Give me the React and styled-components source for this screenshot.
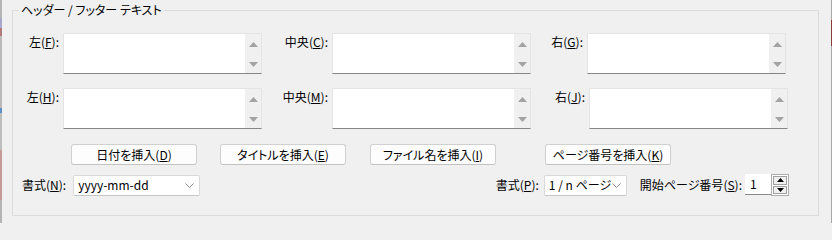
import React from "react";
import styled, { createGlobalStyle } from "styled-components";

const Global = createGlobalStyle`
  html, body { margin: 0; padding: 0; background: #f0f0f0; overflow: hidden; }
  body {
    height: 223px;
    font-family: "Noto Sans CJK JP", "Noto Sans", sans-serif;
    font-size: 12px;
    color: #000;
    font-feature-settings: "palt";
  }
  * { box-sizing: border-box; }
`;

const Page = styled.div`
  width: 832px;
  height: 223px;
  display: flex;
  background: #f0f0f0;
  overflow: hidden;
`;

const LeftEdge = styled.div`
  width: 2px;
  flex: none;
  background: linear-gradient(
    to bottom,
    #b4b4b4 0px, #b4b4b4 18px,
    #a9a6cf 18px, #a9a6cf 28px,
    #b07a7a 28px, #b07a7a 36px,
    #b9b9b9 36px, #b9b9b9 108px,
    #5d8fc8 108px, #5d8fc8 113px,
    #bdbdbd 113px, #bdbdbd 150px,
    #c49a9a 150px, #c49a9a 200px,
    #b4b4b4 200px
  );
`;

const RightEdge = styled.div`
  width: 1px;
  flex: none;
  background: linear-gradient(
    to bottom,
    #a8a8a8 0px, #a8a8a8 20px,
    #8c3b3b 20px, #8c3b3b 46px,
    #a8a8a8 46px
  );
`;

const Main = styled.div`
  flex: 1;
  padding: 2px 12px 7px 10px;
  display: flex;
`;

const Group = styled.fieldset`
  flex: 1;
  margin: 0;
  padding: 0;
  min-width: 0;
  border: 1px solid #dcdcdc;
`;

const Legend = styled.legend`
  margin-left: 6px;
  padding: 0 2px;
  line-height: 16px;
  font-size: 12px;
`;

const Body = styled.div`
  padding: 15px 29px 21px 0;
  display: flex;
  flex-direction: column;
`;

const FieldRow = styled.div`
  display: flex;
  padding-left: 9px;
  margin-top: ${(p) => p.$top || 0}px;
`;

const Cell = styled.div`
  display: flex;
  align-items: flex-start;
  gap: 4px;
  margin-left: ${(p) => p.$before || 0}px;
`;

const FieldLabel = styled.label`
  width: ${(p) => p.$w}px;
  text-align: right;
  line-height: 16px;
  padding-top: 1px;
  white-space: nowrap;
`;

const Key = styled.span`
  text-decoration: underline;
  text-underline-offset: 1px;
`;

const TextBox = styled.div`
  width: 199px;
  height: 41px;
  display: flex;
  background: #fff;
  border: 1px solid #e4e4e4;
  border-bottom-color: #868686;
`;

const TextInput = styled.textarea`
  flex: 1;
  border: none;
  outline: none;
  resize: none;
  background: #fff;
  font: inherit;
  padding: 2px 4px;
  overflow: hidden;
`;

const ScrollTrack = styled.div`
  width: 16px;
  flex: none;
  background: #f0f0f0;
  display: flex;
  flex-direction: column;
  justify-content: space-between;
  align-items: center;
  padding: 8px 0 6px;
`;

const Arrow = ({ dir, color = "#a3a3a3", w = 9, h = 5 }) => (
  <svg width={w} height={h} viewBox="0 0 9 5" style={{ display: "block" }}>
    {dir === "up" ? (
      <polygon points="4.5,0 9,5 0,5" fill={color} />
    ) : (
      <polygon points="0,0 9,0 4.5,5" fill={color} />
    )}
  </svg>
);

const ButtonRow = styled.div`
  display: flex;
  padding-left: 58px;
  margin-top: 15px;
`;

const PushButton = styled.button`
  width: 126px;
  height: 21px;
  margin-left: ${(p) => p.$before || 0}px;
  background: #fdfdfd;
  border: 1px solid #d0d0d0;
  border-bottom-color: #c2c2c2;
  border-radius: 3px;
  font: inherit;
  color: #000;
  padding: 0;
  line-height: 19px;
  white-space: nowrap;
`;

const FormatRow = styled.div`
  display: flex;
  justify-content: space-between;
  align-items: center;
  padding-left: 9px;
  margin-top: 9px;
`;

const Inline = styled.div`
  display: flex;
  align-items: center;
`;

const InlineLabel = styled.label`
  margin-left: ${(p) => p.$before || 0}px;
  margin-right: ${(p) => p.$after || 0}px;
  white-space: nowrap;
  line-height: 16px;
`;

const Combo = styled.div`
  width: ${(p) => p.$w}px;
  height: 21px;
  display: flex;
  align-items: center;
  background: #fff;
  border: 1px solid #d9d9d9;
  border-bottom-color: #c6c6c6;
  border-radius: 2px;
  padding: 0 5px 0 4px;
`;

const ComboText = styled.span`
  flex: 1;
  white-space: nowrap;
  line-height: 16px;
`;

const Chevron = () => (
  <svg width="9" height="5" viewBox="0 0 9 5" style={{ display: "block" }}>
    <polyline points="0.5,0.5 4.5,4.5 8.5,0.5" fill="none" stroke="#8a8a8a" strokeWidth="1" />
  </svg>
);

const Spin = styled.div`
  display: flex;
  height: 22px;
`;

const SpinInput = styled.div`
  width: 26px;
  height: 21px;
  background: #fff;
  border-bottom: 1px solid #8a8a8a;
  padding-left: 5px;
  line-height: 19px;
`;

const SpinButtons = styled.div`
  width: 18px;
  display: flex;
  flex-direction: column;
  background: #fff;
  border: 1px solid #adadad;
  padding: 1px;
  gap: 1px;
`;

const SpinBtn = styled.div`
  flex: 1;
  background: #f0f0f0;
  border: 1px solid #a0a0a0;
  display: flex;
  align-items: center;
  justify-content: center;
`;

const Label = ({ text, k }) => (
  <>
    {text}(<Key>{k}</Key>):
  </>
);

const Field = ({ label, k, w, before }) => (
  <Cell $before={before}>
    <FieldLabel $w={w}>
      <Label text={label} k={k} />
    </FieldLabel>
    <TextBox>
      <TextInput />
      <ScrollTrack>
        <Arrow dir="up" />
        <Arrow dir="down" />
      </ScrollTrack>
    </TextBox>
  </Cell>
);

export default function App() {
  return (
    <>
      <Global />
      <Page>
        <LeftEdge />
        <Main>
          <Group>
            <Legend>ヘッダー / フッター テキスト</Legend>
            <Body>
              <FieldRow>
                <Field label="左" k="F" w={37} />
                <Field label="中央" k="C" w={48} before={18} />
                <Field label="右" k="G" w={35} before={17} />
              </FieldRow>
              <FieldRow $top={14}>
                <Field label="左" k="H" w={37} />
                <Field label="中央" k="M" w={48} before={18} />
                <Field label="右" k="J" w={37} before={17} />
              </FieldRow>
              <ButtonRow>
                <PushButton>日付を挿入(<Key>D</Key>)</PushButton>
                <PushButton $before={23}>タイトルを挿入(<Key>E</Key>)</PushButton>
                <PushButton $before={24}>ファイル名を挿入(<Key>I</Key>)</PushButton>
                <PushButton $before={49}>ページ番号を挿入(<Key>K</Key>)</PushButton>
              </ButtonRow>
              <FormatRow>
                <Inline>
                  <InlineLabel $after={7}>
                    <Label text="書式" k="N" />
                  </InlineLabel>
                  <Combo $w={127}>
                    <ComboText>yyyy-mm-dd</ComboText>
                    <Chevron />
                  </Combo>
                </Inline>
                <Inline>
                  <InlineLabel $after={5}>
                    <Label text="書式" k="P" />
                  </InlineLabel>
                  <Combo $w={83}>
                    <ComboText>1 / n ページ</ComboText>
                    <Chevron />
                  </Combo>
                  <InlineLabel $before={13} $after={3}>
                    <Label text="開始ページ番号" k="S" />
                  </InlineLabel>
                  <Spin>
                    <SpinInput>1</SpinInput>
                    <SpinButtons>
                      <SpinBtn>
                        <Arrow dir="up" color="#000" w={7} h={4} />
                      </SpinBtn>
                      <SpinBtn>
                        <Arrow dir="down" color="#000" w={7} h={4} />
                      </SpinBtn>
                    </SpinButtons>
                  </Spin>
                </Inline>
              </FormatRow>
            </Body>
          </Group>
        </Main>
        <RightEdge />
      </Page>
    </>
  );
}
